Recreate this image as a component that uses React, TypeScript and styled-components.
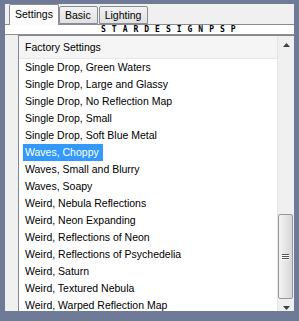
import React from 'react';
import styled, { createGlobalStyle } from 'styled-components';

const GlobalStyle = createGlobalStyle`
  html, body {
    margin: 0;
    padding: 0;
    background: #6f7b96;
  }
  body {
    font-family: "Liberation Sans", Arial, sans-serif;
    font-size: 10.5px;
    color: #000;
  }
`;

const Frame = styled.div`
  width: 299px;
  height: 321px;
  background: #6f7b96;
  padding: 4px 5px 10px 5px;
  box-sizing: border-box;
`;

const Panel = styled.div`
  width: 289px;
  height: 307px;
  background: #f0f0f0;
  display: flex;
  flex-direction: column;
`;

const TabRow = styled.div`
  display: flex;
  align-items: flex-end;
  height: 20px;
  padding-left: 4px;
  border-bottom: 1px solid #898c95;
`;

const Tab = styled.div<{ $active?: boolean }>`
  box-sizing: border-box;
  height: ${p => (p.$active ? '21px' : '18px')};
  margin-bottom: ${p => (p.$active ? '-1px' : '0')};
  padding: ${p => (p.$active ? '3px 5px 0 5px' : '2px 6px 0 5px')};
  border: 1px solid #898c95;
  border-bottom: ${p => (p.$active ? 'none' : '1px solid #898c95')};
  margin-right: ${p => (p.$active ? '0' : '1px')};
  background: ${p =>
    p.$active ? '#fcfcfc' : 'linear-gradient(#f2f2f2, #e1e1e1)'};
  border-radius: 2px 2px 0 0;
  font-size: 10.5px;
  white-space: nowrap;
  z-index: ${p => (p.$active ? 1 : 0)};
`;

const Page = styled.div`
  flex: 1;
  display: flex;
  flex-direction: column;
  min-height: 0;
`;

const Watermark = styled.div`
  height: 9px;
  background: #fff;
  border-bottom: 1px solid #8e8e8e;
  padding-left: 96px;
  font-family: "DejaVu Sans Mono", "Liberation Mono", monospace;
  font-weight: bold;
  font-size: 8px;
  line-height: 9px;
  letter-spacing: 6px;
  color: #000;
  overflow: hidden;
`;

const ListArea = styled.div`
  flex: 1;
  padding-left: 13px;
  display: flex;
  min-height: 0;
`;

const ListBox = styled.div`
  flex: 1;
  display: flex;
  border-top: 1px solid #828790;
  border-left: 1px solid #828790;
  background: #fff;
  min-height: 0;
`;

const ListContent = styled.div`
  flex: 1;
  overflow: hidden;
  display: flex;
  flex-direction: column;
`;

const Header = styled.div`
  height: 22px;
  flex-shrink: 0;
  background: #f5f5f5;
  border-bottom: 1px solid #e6e6e6;
  padding-left: 6px;
  line-height: 22px;
`;

const Item = styled.div`
  height: 17px;
  flex-shrink: 0;
  padding-left: 4px;
  line-height: 17px;
`;

const Label = styled.span<{ $selected?: boolean }>`
  display: inline-block;
  padding: 0 4px 0 2px;
  background: ${p => (p.$selected ? '#3399ff' : 'transparent')};
  color: ${p => (p.$selected ? '#fff' : '#000')};
  white-space: nowrap;
`;

const ScrollBar = styled.div`
  width: 16px;
  flex-shrink: 0;
  background: #f0f0f0;
  border-left: 1px solid #e6e6e6;
  display: flex;
  flex-direction: column;
`;

const ArrowButton = styled.div`
  height: 17px;
  flex-shrink: 0;
  display: flex;
  align-items: center;
  justify-content: center;
`;

const Track = styled.div`
  flex: 1;
  display: flex;
  flex-direction: column;
`;

const Thumb = styled.div`
  box-sizing: border-box;
  height: 85px;
  width: 15px;
  border: 1px solid #989898;
  border-radius: 2px;
  background: linear-gradient(to right, #f3f3f3, #e6e6e6 50%, #d6d6d6);
  display: flex;
  align-items: center;
  justify-content: center;
`;

const Grip = styled.div`
  width: 7px;
  display: flex;
  flex-direction: column;
  gap: 1px;
  & > span {
    display: block;
    height: 1px;
    background: #555;
    box-shadow: 0 1px 0 #fff;
  }
`;

const items = [
  'Single Drop, Green Waters',
  'Single Drop, Large and Glassy',
  'Single Drop, No Reflection Map',
  'Single Drop, Small',
  'Single Drop, Soft Blue Metal',
  'Waves, Choppy',
  'Waves, Small and Blurry',
  'Waves, Soapy',
  'Weird, Nebula Reflections',
  'Weird, Neon Expanding',
  'Weird, Reflections of Neon',
  'Weird, Reflections of Psychedelia',
  'Weird, Saturn',
  'Weird, Textured Nebula',
  'Weird, Warped Reflection Map',
];

function Arrow({ down }: { down?: boolean }) {
  return (
    <svg width="7" height="4" viewBox="0 0 7 4">
      <path
        d={down ? 'M0 0 H7 L3.5 4 Z' : 'M0 4 H7 L3.5 0 Z'}
        fill="#404040"
      />
    </svg>
  );
}

function App() {
  const selected = 'Waves, Choppy';
  const thumbTop = 161;
  return (
    <Frame>
      <GlobalStyle />
      <Panel>
        <TabRow>
          <Tab $active>Settings</Tab>
          <Tab>Basic</Tab>
          <Tab>Lighting</Tab>
        </TabRow>
        <Page>
          <Watermark>STARDESIGNPSP</Watermark>
          <ListArea>
            <ListBox>
              <ListContent>
                <Header>Factory Settings</Header>
                {items.map(name => (
                  <Item key={name}>
                    <Label $selected={name === selected}>{name}</Label>
                  </Item>
                ))}
              </ListContent>
              <ScrollBar>
                <ArrowButton>
                  <Arrow />
                </ArrowButton>
                <Track>
                  <Thumb style={{ marginTop: thumbTop }}>
                    <Grip>
                      <span />
                      <span />
                      <span />
                    </Grip>
                  </Thumb>
                </Track>
                <ArrowButton>
                  <Arrow down />
                </ArrowButton>
              </ScrollBar>
            </ListBox>
          </ListArea>
        </Page>
      </Panel>
    </Frame>
  );
}

export default App;
